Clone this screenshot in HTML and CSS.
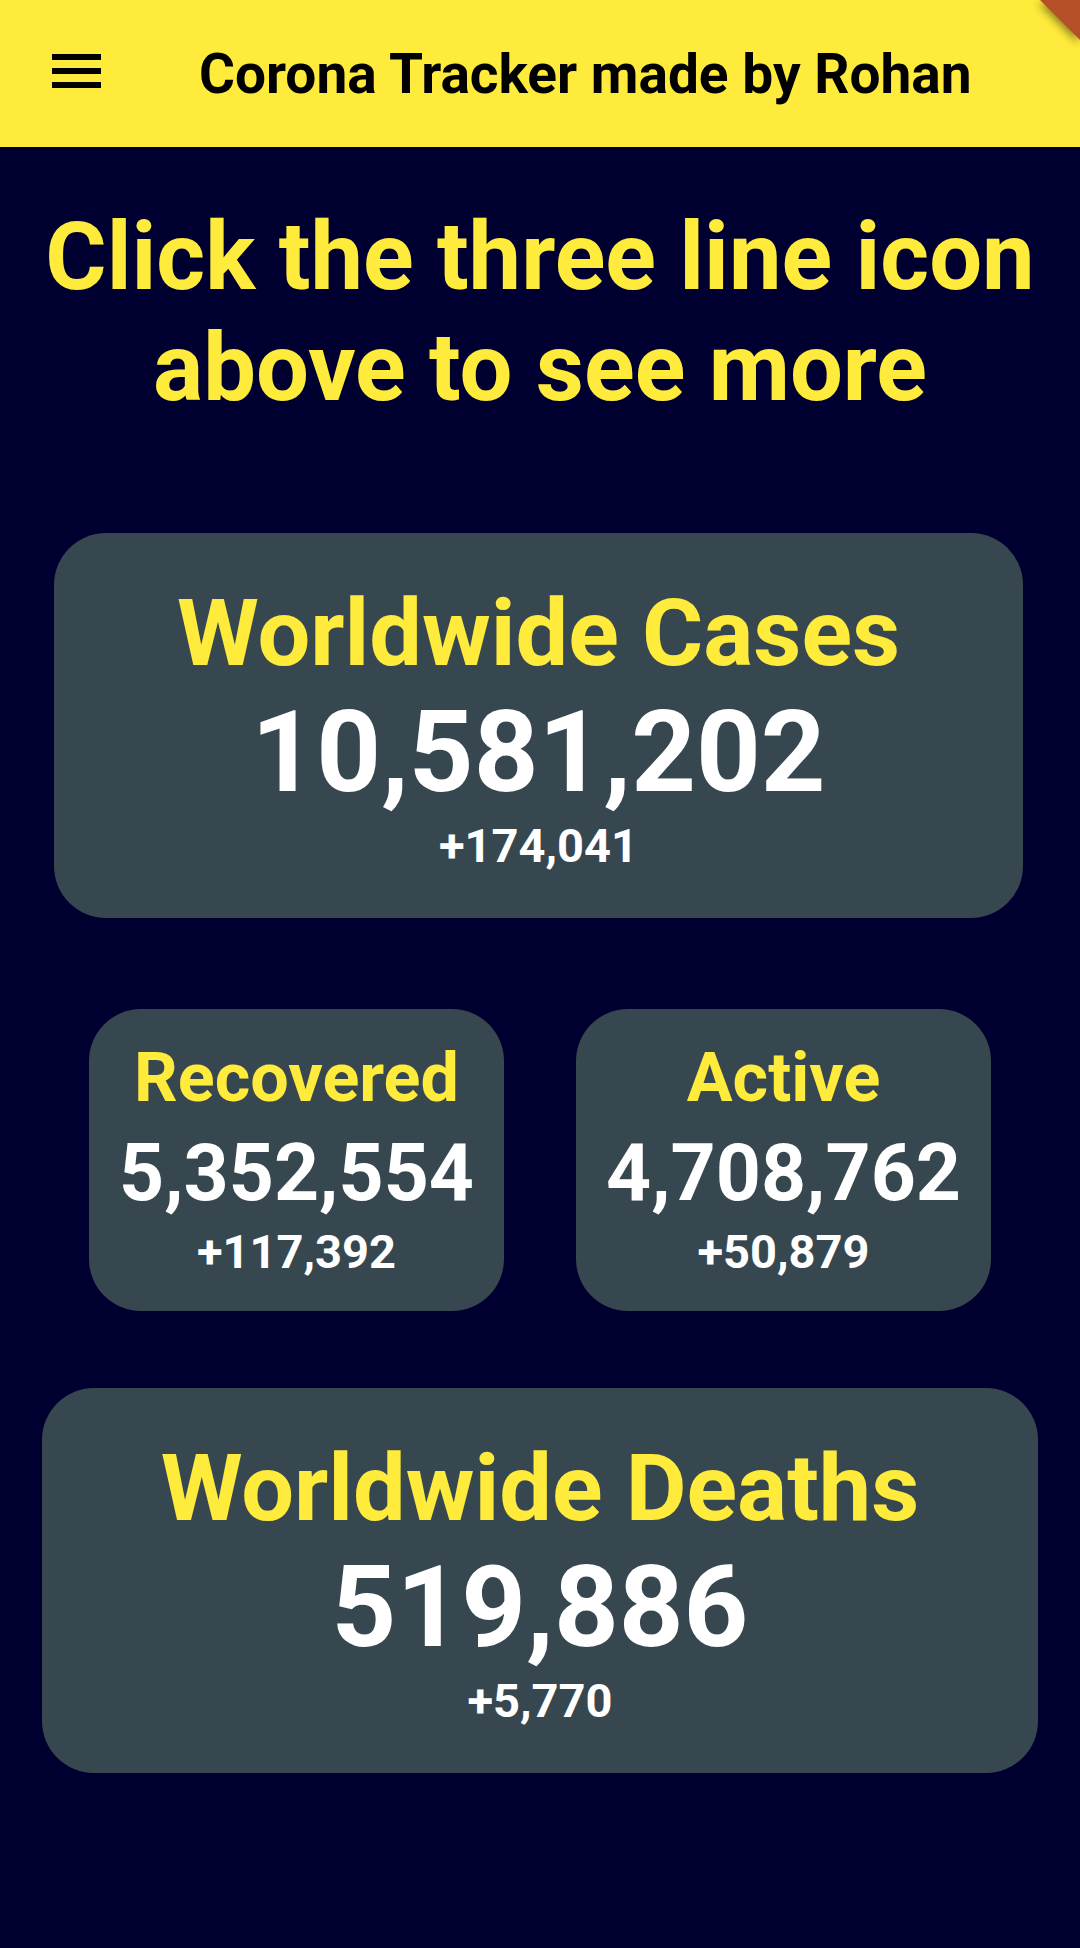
FILE: index.html
```html
<!DOCTYPE html>
<html lang="en">
<head>
<meta charset="utf-8">
<title>Corona Tracker</title>
<link rel="stylesheet" href="styles.css">
</head>
<body>
<header class="appbar">
  <svg class="menu-icon" width="49" height="35" viewBox="0 0 49 35" aria-hidden="true">
    <rect x="0" y="0" width="49" height="6" fill="#000"/>
    <rect x="0" y="14" width="49" height="6" fill="#000"/>
    <rect x="0" y="28" width="49" height="6" fill="#000"/>
  </svg>
  <h1 class="appbar-title">Corona Tracker made by Rohan</h1>
</header>
<div class="debug-banner"><div class="debug-banner-shape"></div></div>

<main class="content">
  <p class="headline">Click the three line icon above to see more</p>

  <section class="card card-wide card-cases">
    <div class="card-title big">Worldwide Cases</div>
    <div class="card-number big">10,581,202</div>
    <div class="card-delta big">+174,041</div>
  </section>

  <div class="card-row">
    <section class="card card-small">
      <div class="card-title small">Recovered</div>
      <div class="card-number small">5,352,554</div>
      <div class="card-delta small">+117,392</div>
    </section>
    <section class="card card-small">
      <div class="card-title small">Active</div>
      <div class="card-number small">4,708,762</div>
      <div class="card-delta small">+50,879</div>
    </section>
  </div>

  <section class="card card-wide card-deaths">
    <div class="card-title big">Worldwide Deaths</div>
    <div class="card-number big">519,886</div>
    <div class="card-delta big">+5,770</div>
  </section>
</main>
</body>
</html>
```
FILE: styles.css
```css
* { box-sizing: border-box; }
html, body {
  margin: 0;
  padding: 0;
}
body {
  width: 1080px;
  height: 1948px;
  overflow: hidden;
  background: #000030;
  font-family: Roboto, "Noto Sans", "Liberation Sans", sans-serif;
  position: relative;
}
.appbar {
  height: 147px;
  background: #FFEB3B;
  display: flex;
  align-items: center;
  padding-left: 52px;
  box-shadow: 0 2px 4px rgba(0,0,0,0.35);
  position: relative;
  z-index: 1;
}
.menu-icon {
  display: block;
  flex: none;
  margin-right: 98px;
  margin-bottom: 5px;
}
.appbar-title {
  margin: 0;
  font-size: 55px;
  font-weight: 700;
  color: #000;
  white-space: nowrap;
}
.debug-banner {
  position: absolute;
  top: 0;
  right: 0;
  width: 80px;
  height: 80px;
  z-index: 2;
  filter: drop-shadow(-2px 3px 4px rgba(0,0,0,0.45));
}
.debug-banner-shape {
  width: 100%;
  height: 100%;
  background: #b54f27;
  clip-path: polygon(40px 0, 80px 0, 80px 40px);
}
.content {
  padding-top: 55px;
}
.headline {
  margin: 0;
  text-align: center;
  color: #FFEB3B;
  font-size: 93.8px;
  font-weight: 700;
  line-height: 110.7px;
}
.card {
  background: #37474F;
  border-radius: 52px;
  text-align: center;
}
.card-wide {
  padding: 50px 0 50px;
}
.card-cases {
  margin: 110px 0 0 54px;
  width: 969px;
}
.card-deaths {
  margin: 77px 0 0 42px;
  width: 996px;
}
.card-row {
  display: flex;
  gap: 72px;
  margin-top: 91px;
  padding-left: 89px;
}
.card-small {
  width: 415px;
  padding: 29px 0 35px;
}
.card-title {
  color: #FFEB3B;
  font-weight: 700;
}
.card-number, .card-delta {
  color: #fff;
  font-weight: 700;
}
.card-title.big { font-size: 93.6px; line-height: 100px; }
.card-number.big { font-size: 113px; line-height: 140.8px; }
.card-delta.big { font-size: 47px; line-height: 44px; }
.card-title.small { font-size: 68.25px; line-height: 80px; }
.card-number.small { font-size: 78.75px; line-height: 110.8px; }
.card-delta.small { font-size: 47px; line-height: 46.8px; }
```
